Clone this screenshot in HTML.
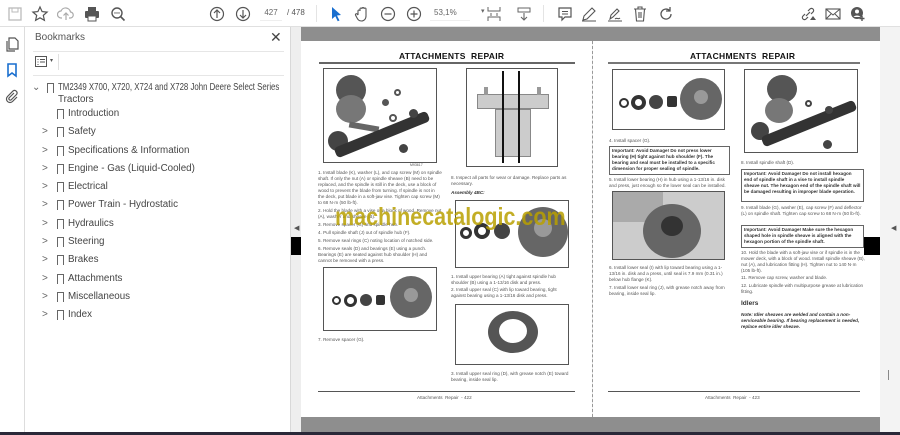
<!DOCTYPE html>
<html><head><meta charset="utf-8">
<style>
*{margin:0;padding:0;box-sizing:border-box}
body{width:900px;height:435px;overflow:hidden;background:#fff;font-family:"Liberation Sans",sans-serif;position:relative}
.a{position:absolute}
.tb{left:0;top:0;width:900px;height:27px;background:#fff;border-bottom:1px solid #e0e0e0}
.ic{position:absolute;top:5px;width:18px;height:18px}
.side{left:0;top:27px;width:25px;height:405px;background:#fff;border-right:1px solid #ddd}
.panel{left:25px;top:27px;width:266px;height:405px;background:#fff;border-right:1px solid #d8d8d8;overflow:hidden}
.bm{position:absolute;left:0;font-size:9.8px;color:#444;white-space:nowrap}
.bm .ch{position:absolute;left:17px;top:0;color:#666;font-size:10px}
.bm .bk{position:absolute;left:32px;top:1px;width:7px;height:10px;border:1px solid #666;border-bottom:none}
.bm .t{position:absolute;left:43px;top:0}
.doc{left:291px;top:27px;width:609px;height:405px;background:#eeeeee}
.page{position:absolute;background:#fff;top:41px;height:376px}
.tx{position:absolute;font-size:4.6px;line-height:5.9px;color:#555}
.fig{position:absolute;border:1px solid #555;background:#fff;overflow:hidden}
.box{position:absolute;border:1px solid #666;font-size:4.6px;line-height:5.9px;font-weight:bold;color:#333;padding:1px 2px}
.title{position:absolute;font-size:8.5px;font-weight:bold;color:#111;letter-spacing:.3px}
.circ{position:absolute;border-radius:50%}
</style></head><body>

<div class="a tb">
 <svg class="ic" style="left:6px" viewBox="0 0 18 18"><rect x="3" y="3" width="12" height="12" fill="none" stroke="#bbb" stroke-width="1.3"/><rect x="6" y="3" width="6" height="4" fill="none" stroke="#bbb"/></svg>
 <svg class="ic" style="left:31px" viewBox="0 0 18 18"><path d="M9 2l2.1 4.6 5 .5-3.8 3.3 1.1 4.9L9 12.8 4.6 15.3l1.1-4.9L1.9 7.1l5-.5z" fill="none" stroke="#555" stroke-width="1.2"/></svg>
 <svg class="ic" style="left:57px" viewBox="0 0 18 18"><path d="M5 13h-1a3.5 3.5 0 010-7 5 5 0 019.5 1A3 3 0 0113 13h-1M9 15V8M6.5 10.5L9 8l2.5 2.5" fill="none" stroke="#aaa" stroke-width="1.2"/></svg>
 <svg class="ic" style="left:83px" viewBox="0 0 18 18"><rect x="5" y="2" width="8" height="4" fill="#555"/><rect x="2" y="6" width="14" height="7" rx="1" fill="#555"/><rect x="5" y="11" width="8" height="5" fill="#fff" stroke="#555"/></svg>
 <svg class="ic" style="left:109px" viewBox="0 0 18 18"><circle cx="8" cy="8" r="5" fill="none" stroke="#555" stroke-width="1.4"/><path d="M11.5 11.5l4 4" stroke="#555" stroke-width="1.6"/><circle cx="6" cy="8" r=".7" fill="#555"/><circle cx="8" cy="8" r=".7" fill="#555"/><circle cx="10" cy="8" r=".7" fill="#555"/></svg>
 <svg class="ic" style="left:208px" viewBox="0 0 18 18"><circle cx="9" cy="9" r="6.5" fill="none" stroke="#555" stroke-width="1.2"/><path d="M9 13V5M6 8l3-3 3 3" fill="none" stroke="#555" stroke-width="1.2"/></svg>
 <svg class="ic" style="left:234px" viewBox="0 0 18 18"><circle cx="9" cy="9" r="6.5" fill="none" stroke="#555" stroke-width="1.2"/><path d="M9 5v8M6 10l3 3 3-3" fill="none" stroke="#555" stroke-width="1.2"/></svg>
 <div class="a" style="left:260px;top:6px;width:22px;height:15px;border-bottom:1px solid #eee;font-size:8px;color:#666;text-align:center;line-height:14px">427</div>
 <div class="a" style="left:287px;top:6px;font-size:8px;color:#555;line-height:14px">/ 478</div>
 <div class="a" style="left:316px;top:5px;width:1px;height:17px;background:#e4e4e4"></div>
 <svg class="ic" style="left:327px" viewBox="0 0 18 18"><path d="M5 2l9 8-4 .5 2.5 5-1.8.8-2.4-5L5 14z" fill="#1a6fcf"/></svg>
 <svg class="ic" style="left:353px" viewBox="0 0 18 18"><path d="M5 10V6a1 1 0 012 0V4a1 1 0 012 0v-.5a1 1 0 012 0V4a1 1 0 012 0v7c0 3-2 5-4.5 5S5 15 3.5 12L2.5 10a1 1 0 012-.5L5 10" fill="none" stroke="#555" stroke-width="1.1"/></svg>
 <svg class="ic" style="left:379px" viewBox="0 0 18 18"><circle cx="9" cy="9" r="6.5" fill="none" stroke="#555" stroke-width="1.2"/><path d="M5.5 9h7" stroke="#555" stroke-width="1.2"/></svg>
 <svg class="ic" style="left:405px" viewBox="0 0 18 18"><circle cx="9" cy="9" r="6.5" fill="none" stroke="#555" stroke-width="1.2"/><path d="M5.5 9h7M9 5.5v7" stroke="#555" stroke-width="1.2"/></svg>
 <div class="a" style="left:430px;top:6px;width:40px;height:15px;border-bottom:1px solid #eee;font-size:8px;color:#666;line-height:14px;padding-left:4px">53,1%</div>
 <div class="a" style="left:481px;top:7px;font-size:7px;color:#666">▾</div>
 <svg class="ic" style="left:485px" viewBox="0 0 18 18"><path d="M3 2v4h12V2M3 16v-4h12v4M6 8v3M12 8v3" fill="none" stroke="#666" stroke-width="1"/></svg>
 <svg class="ic" style="left:515px" viewBox="0 0 18 18"><rect x="3" y="3" width="12" height="4" fill="none" stroke="#666"/><path d="M9 8v7M6 12l3 3 3-3" fill="none" stroke="#666" stroke-width="1.1"/></svg>
 <div class="a" style="left:543px;top:5px;width:1px;height:17px;background:#e4e4e4"></div>
 <svg class="ic" style="left:556px" viewBox="0 0 18 18"><path d="M3 3h12v9H9l-3 3v-3H3z" fill="none" stroke="#555" stroke-width="1.2"/><path d="M6 6.5h6M6 9h6" stroke="#555"/></svg>
 <svg class="ic" style="left:580px" viewBox="0 0 18 18"><path d="M3 15l1-4 8-8 3 3-8 8zM2 16h14" fill="none" stroke="#555" stroke-width="1.1"/></svg>
 <svg class="ic" style="left:606px" viewBox="0 0 18 18"><path d="M4 14l1-4 6-6 2 2-6 6zM9 14c2-2 3 1 5-1M2 16h14" fill="none" stroke="#555" stroke-width="1.1"/></svg>
 <svg class="ic" style="left:631px" viewBox="0 0 18 18"><path d="M3 4h12M7 4V2h4v2M4.5 4l1 12h7l1-12M8 7v6M10 7v6" fill="none" stroke="#555" stroke-width="1.1"/></svg>
 <svg class="ic" style="left:657px" viewBox="0 0 18 18"><path d="M14 9a5 5 0 11-1.5-3.5M13 2v4h-4" fill="none" stroke="#555" stroke-width="1.3"/></svg>
 <svg class="ic" style="left:799px" viewBox="0 0 18 18"><path d="M7 11l4-4M6 9L4 11a2 2 0 003 3l2-2M12 9l2-2a2 2 0 00-3-3L9 6" fill="none" stroke="#555" stroke-width="1.2"/><path d="M11 15l3-4 3 4z" fill="#555"/></svg>
 <svg class="ic" style="left:824px" viewBox="0 0 18 18"><rect x="2" y="4" width="14" height="10" fill="none" stroke="#555" stroke-width="1.1"/><path d="M2 4l7 6 7-6M2 14l5-5M16 14l-5-5" fill="none" stroke="#555"/></svg>
 <svg class="ic" style="left:849px" viewBox="0 0 18 18"><circle cx="8" cy="8" r="6" fill="#555"/><circle cx="8" cy="6.5" r="2" fill="#fff"/><path d="M4.5 12a4 3 0 017 0" fill="#fff"/><path d="M13 11v5M10.5 13.5h5" stroke="#555" stroke-width="1.4"/></svg>
</div>

<div class="a side">
 <svg class="a" style="left:4px;top:9px" width="16" height="16" viewBox="0 0 16 16"><path d="M5 2h6l3 3v8H5zM3 5v10h8" fill="none" stroke="#555" stroke-width="1.2"/></svg>
 <svg class="a" style="left:5px;top:35px" width="14" height="16" viewBox="0 0 14 16"><path d="M3 2h8v12l-4-3-4 3z" fill="none" stroke="#1a6fcf" stroke-width="1.6"/></svg>
 <svg class="a" style="left:4px;top:62px" width="16" height="16" viewBox="0 0 16 16"><path d="M10 4l-5 5a1.5 1.5 0 002 2l5.5-5.5a2.5 2.5 0 00-3.5-3.5L3.5 7.5a3.5 3.5 0 005 5L13 8" fill="none" stroke="#555" stroke-width="1.2"/></svg>
</div>

<div class="a panel">
 <div class="a" style="left:10px;top:5px;font-size:10px;color:#555">Bookmarks</div>
 <div class="a" style="left:245px;top:2px;font-size:14px;color:#444">✕</div>
 <div class="a" style="left:8px;top:24px;width:251px;height:1px;background:#e6e6e6"></div>
 <svg class="a" style="left:10px;top:29px" width="12" height="11" viewBox="0 0 12 11"><rect x=".5" y=".5" width="11" height="10" fill="none" stroke="#555"/><path d="M2.5 3.5h1M5 3.5h5M2.5 6h1M5 6h5M2.5 8.5h1" stroke="#555"/></svg>
 <div class="a" style="left:25px;top:30px;font-size:6px;color:#555">▾</div>
 <div class="a" style="left:33px;top:27px;width:1px;height:16px;background:#e0e0e0"></div>
 <div class="a" style="left:8px;top:48px;width:251px;height:1px;background:#e6e6e6"></div>
 <div class="bm" style="top:55px"><span class="ch" style="left:7px">⌄</span><span class="bk" style="left:22px"></span><span class="t" style="left:33px;line-height:12px;transform:scaleX(0.8);transform-origin:left top">TM2349 X700, X720, X724 and X728 John Deere Select Series</span><span class="t" style="left:33px;top:12px">Tractors</span></div>
 <div class="bm" style="top:81px"><span class="bk"></span><span class="t">Introduction</span></div>
 <div class="bm" style="top:99px"><span class="ch">&gt;</span><span class="bk"></span><span class="t">Safety</span></div>
 <div class="bm" style="top:118px"><span class="ch">&gt;</span><span class="bk"></span><span class="t">Specifications &amp; Information</span></div>
 <div class="bm" style="top:136px"><span class="ch">&gt;</span><span class="bk"></span><span class="t">Engine - Gas (Liquid-Cooled)</span></div>
 <div class="bm" style="top:154px"><span class="ch">&gt;</span><span class="bk"></span><span class="t">Electrical</span></div>
 <div class="bm" style="top:172px"><span class="ch">&gt;</span><span class="bk"></span><span class="t">Power Train - Hydrostatic</span></div>
 <div class="bm" style="top:191px"><span class="ch">&gt;</span><span class="bk"></span><span class="t">Hydraulics</span></div>
 <div class="bm" style="top:209px"><span class="ch">&gt;</span><span class="bk"></span><span class="t">Steering</span></div>
 <div class="bm" style="top:227px"><span class="ch">&gt;</span><span class="bk"></span><span class="t">Brakes</span></div>
 <div class="bm" style="top:246px"><span class="ch">&gt;</span><span class="bk"></span><span class="t">Attachments</span></div>
 <div class="bm" style="top:264px"><span class="ch">&gt;</span><span class="bk"></span><span class="t">Miscellaneous</span></div>
 <div class="bm" style="top:282px"><span class="ch">&gt;</span><span class="bk"></span><span class="t">Index</span></div>
</div>

<div class="a doc"></div>
<div class="a" style="left:301px;top:27px;width:579px;height:14px;background:#8e8e8e"></div>
<div class="a" style="left:301px;top:417px;width:579px;height:15px;background:#8e8e8e"></div>
<div class="a" style="left:0;top:432px;width:900px;height:3px;background:#2a2838"></div>
<div class="a" style="left:880px;top:27px;width:20px;height:405px;background:#f3f3f3"></div>
<div class="a" style="left:888px;top:370px;width:1px;height:10px;background:#888"></div>

<div class="page" style="left:301px;width:291px"></div>
<div class="page" style="left:593px;width:287px"></div>
<div class="a" style="left:592px;top:41px;height:376px;border-left:1px dashed #999"></div>

<!-- LEFT PAGE -->
<div class="title" style="left:399px;top:51px">ATTACHMENTS &nbsp;REPAIR</div>
<div class="a" style="left:319px;top:62px;width:256px;height:1.5px;background:#666"></div>
<div class="fig" style="left:323px;top:68px;width:114px;height:95px">
 <div class="circ" style="left:12px;top:6px;width:30px;height:30px;background:#555"></div>
 <div class="circ" style="left:12px;top:26px;width:30px;height:28px;background:#777"></div>
 <div class="a" style="left:25px;top:55px;width:30px;height:6px;background:#666;transform:rotate(10deg)"></div>
 <div class="circ" style="left:4px;top:62px;width:20px;height:20px;background:#444"></div>
 <div class="a" style="left:8px;top:60px;width:100px;height:11px;background:#333;transform:rotate(-22deg);border-radius:4px"></div>
 <div class="circ" style="left:58px;top:30px;width:7px;height:7px;background:#555"></div>
 <div class="circ" style="left:70px;top:20px;width:7px;height:7px;border:2px solid #555"></div>
 <div class="circ" style="left:85px;top:40px;width:9px;height:9px;background:#444"></div>
 <div class="circ" style="left:65px;top:45px;width:8px;height:8px;border:2px solid #555"></div>
 <div class="circ" style="left:75px;top:75px;width:9px;height:9px;background:#444"></div>
</div>
<div class="tx" style="left:410px;top:163px;font-size:3.5px">M93617</div>
<div class="fig" style="left:466px;top:68px;width:92px;height:99px">
 <div class="a" style="left:10px;top:25px;width:72px;height:15px;background:#ccc;border:1px solid #888"></div>
 <div class="a" style="left:28px;top:40px;width:36px;height:48px;background:#ccc;border:1px solid #888"></div>
 <div class="a" style="left:35px;top:2px;width:2px;height:92px;background:#111"></div>
 <div class="a" style="left:51px;top:2px;width:2px;height:92px;background:#111"></div>
 <div class="a" style="left:17px;top:18px;width:4px;height:8px;background:#999"></div>
 <div class="a" style="left:70px;top:18px;width:4px;height:8px;background:#999"></div>
</div>
<div class="tx" style="left:318px;top:170px;width:124px">1. Install blade (K), washer (L), and cap screw (M) on spindle shaft. If only the nut (A) or spindle sheave (B) need to be replaced, and the spindle is still in the deck, use a block of wood to prevent the blade from turning. If spindle is not in the deck, put blade in a soft-jaw vise. Tighten cap screw (M) to 68 N·m (50 lb-ft).</div>
<div class="tx" style="left:318px;top:208px;width:124px">2. Hold the blade with a vise or a block of wood. Remove nut (A), washer and sheave (B).</div>
<div class="tx" style="left:318px;top:222px;width:124px">3. Remove spacer (G) and spindle hub.</div>
<div class="tx" style="left:318px;top:230px;width:124px">4. Pull spindle shaft (J) out of spindle hub (F).</div>
<div class="tx" style="left:318px;top:238px;width:124px">5. Remove seal rings (C) noting location of notched side.</div>
<div class="tx" style="left:318px;top:246px;width:124px">6. Remove seals (D) and bearings (E) using a punch. Bearings (E) are seated against hub shoulder (H) and cannot be removed with a press.</div>
<div class="fig" style="left:323px;top:267px;width:114px;height:64px">
 <div class="circ" style="left:8px;top:28px;width:9px;height:9px;border:2px solid #333"></div>
 <div class="circ" style="left:20px;top:26px;width:13px;height:13px;border:3px solid #333"></div>
 <div class="circ" style="left:36px;top:26px;width:12px;height:12px;background:#444"></div>
 <div class="a" style="left:52px;top:27px;width:9px;height:10px;background:#333;border-radius:2px"></div>
 <div class="circ" style="left:66px;top:8px;width:42px;height:42px;background:#666"></div>
 <div class="circ" style="left:80px;top:20px;width:14px;height:14px;background:#999"></div>
</div>
<div class="tx" style="left:318px;top:337px">7. Remove spacer (G).</div>

<div class="tx" style="left:451px;top:175px;width:118px">8. Inspect all parts for wear or damage. Replace parts as necessary.</div>
<div class="tx" style="left:451px;top:190px;font-weight:bold;font-style:italic;color:#333">Assembly 4BC:</div>
<div class="fig" style="left:455px;top:200px;width:114px;height:68px">
 <div class="circ" style="left:4px;top:26px;width:12px;height:12px;border:3px solid #333"></div>
 <div class="circ" style="left:18px;top:22px;width:16px;height:16px;border:4px solid #333"></div>
 <div class="circ" style="left:38px;top:22px;width:16px;height:16px;background:#444"></div>
 <div class="circ" style="left:62px;top:6px;width:50px;height:50px;background:#666"></div>
 <div class="circ" style="left:78px;top:18px;width:18px;height:18px;background:#999"></div>
</div>
<div class="tx" style="left:451px;top:274px;width:120px">1. Install upper bearing (A) tight against spindle hub shoulder (B) using a 1-13/16 disk and press.</div>
<div class="tx" style="left:451px;top:287px;width:120px">2. Install upper seal (C) with lip toward bearing, tight against bearing using a 1-13/16 disk and press.</div>
<div class="fig" style="left:455px;top:304px;width:114px;height:61px">
 <div class="circ" style="left:32px;top:6px;width:50px;height:42px;background:#555"></div>
 <div class="circ" style="left:43px;top:14px;width:28px;height:24px;background:#fff"></div>
</div>
<div class="tx" style="left:451px;top:371px;width:124px">3. Install upper seal ring (D), with grease notch (E) toward bearing, inside seal lip.</div>
<div class="a" style="left:318px;top:391px;width:257px;height:1px;background:#555"></div>
<div class="tx" style="left:417px;top:395px">Attachments &nbsp;Repair &nbsp;- 422</div>

<!-- RIGHT PAGE -->
<div class="title" style="left:690px;top:51px">ATTACHMENTS &nbsp;REPAIR</div>
<div class="a" style="left:608px;top:62px;width:252px;height:1.5px;background:#777"></div>
<div class="fig" style="left:612px;top:69px;width:113px;height:61px">
 <div class="circ" style="left:6px;top:28px;width:10px;height:10px;border:2px solid #333"></div>
 <div class="circ" style="left:18px;top:25px;width:15px;height:15px;border:4px solid #333"></div>
 <div class="circ" style="left:36px;top:25px;width:14px;height:14px;background:#444"></div>
 <div class="a" style="left:54px;top:26px;width:10px;height:11px;background:#333;border-radius:2px"></div>
 <div class="circ" style="left:67px;top:8px;width:42px;height:42px;background:#666"></div>
 <div class="circ" style="left:81px;top:20px;width:14px;height:14px;background:#999"></div>
</div>
<div class="fig" style="left:744px;top:69px;width:114px;height:84px">
 <div class="circ" style="left:22px;top:5px;width:30px;height:28px;background:#555"></div>
 <div class="circ" style="left:20px;top:28px;width:28px;height:25px;background:#777"></div>
 <div class="circ" style="left:6px;top:52px;width:18px;height:18px;background:#444"></div>
 <div class="a" style="left:14px;top:48px;width:100px;height:11px;background:#333;transform:rotate(-22deg);border-radius:4px"></div>
 <div class="circ" style="left:60px;top:30px;width:7px;height:7px;border:2px solid #444"></div>
 <div class="circ" style="left:80px;top:36px;width:8px;height:8px;background:#444"></div>
 <div class="circ" style="left:78px;top:70px;width:9px;height:9px;background:#444"></div>
</div>
<div class="tx" style="left:609px;top:138px">4. Install spacer (G).</div>
<div class="box" style="left:609px;top:146px;width:121px;height:29px">Important: Avoid Damage! Do not press lower bearing (H) tight against hub shoulder (F). The bearing and seal must be installed to a specific dimension for proper sealing of spindle.</div>
<div class="tx" style="left:609px;top:177px;width:124px">5. Install lower bearing (H) in hub using a 1-13/16 in. disk and press, just enough so the lower seal can be installed.</div>
<div class="fig" style="left:612px;top:191px;width:113px;height:69px;background:#ccc">
 <div class="a" style="left:0;top:0;width:50px;height:30px;background:#aaa"></div>
 <div class="circ" style="left:30px;top:12px;width:58px;height:54px;background:#666"></div>
 <div class="circ" style="left:48px;top:24px;width:22px;height:20px;background:#333"></div>
</div>
<div class="tx" style="left:609px;top:265px;width:124px">6. Install lower seal (I) with lip toward bearing using a 1-13/16 in. disk and a press, until seal is 7.9 mm (0.31 in.) below hub flange (K).</div>
<div class="tx" style="left:609px;top:285px;width:124px">7. Install lower seal ring (J), with grease notch away from bearing, inside seal lip.</div>

<div class="tx" style="left:741px;top:160px">8. Install spindle shaft (D).</div>
<div class="box" style="left:741px;top:169px;width:123px;height:33px">Important: Avoid Damage! Do not install hexagon end of spindle shaft in a vise to install spindle sheave nut. The hexagon end of the spindle shaft will be damaged resulting in improper blade operation.</div>
<div class="tx" style="left:741px;top:205px;width:124px">9. Install blade (G), washer (E), cap screw (F) and deflector (L) on spindle shaft. Tighten cap screw to 68 N·m (50 lb-ft).</div>
<div class="box" style="left:741px;top:225px;width:123px;height:23px">Important: Avoid Damage! Make sure the hexagon shaped hole in spindle sheave is aligned with the hexagon portion of the spindle shaft.</div>
<div class="tx" style="left:741px;top:250px;width:124px">10. Hold the blade with a soft-jaw vise or if spindle is in the mower deck, with a block of wood. Install spindle sheave (B), nut (A), and lubrication fitting (H). Tighten nut to 140 N·m (105 lb-ft).</div>
<div class="tx" style="left:741px;top:275px">11. Remove cap screw, washer and blade.</div>
<div class="tx" style="left:741px;top:283px;width:124px">12. Lubricate spindle with multipurpose grease at lubrication fitting.</div>
<div class="a" style="left:741px;top:300px;font-size:6.5px;font-weight:bold;color:#333">Idlers</div>
<div class="tx" style="left:741px;top:312px;width:124px;font-weight:bold;font-style:italic;color:#333">Note: Idler sheaves are welded and contain a non-serviceable bearing. If bearing replacement is needed, replace entire idler sheave.</div>
<div class="a" style="left:608px;top:391px;width:252px;height:1px;background:#555"></div>
<div class="tx" style="left:705px;top:395px">Attachments &nbsp;Repair &nbsp;- 423</div>

<!-- black tabs and arrows -->
<div class="a" style="left:291px;top:237px;width:10px;height:18px;background:#000"></div>
<div class="a" style="left:864px;top:237px;width:16px;height:18px;background:#000"></div>
<div class="a" style="left:294px;top:224px;font-size:7px;color:#555">◀</div>
<div class="a" style="left:891px;top:224px;font-size:7px;color:#555">◀</div>

<!-- watermark -->
<div class="a" style="left:335px;top:203px;font-size:25px;font-weight:bold;color:rgba(185,160,0,0.85);transform:scaleX(0.86);transform-origin:left top">machinecatalogic.com</div>
</body></html>
